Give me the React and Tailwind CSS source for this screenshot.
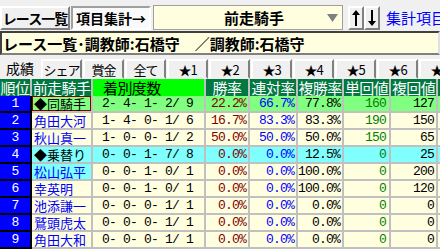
import React from "react";

const jp = "font-['Noto_Sans_CJK_JP',sans-serif]";
const mono = "font-['Liberation_Mono','Noto_Sans_CJK_JP',monospace] text-[13px] leading-none tracking-[-0.8px] whitespace-pre";

const tabs = ["成績", "シェア", "賞金", "全て", "★1", "★2", "★3", "★4", "★5", "★6", "★7"];

const cols = [
  { title: "順位", w: "w-[32px]" },
  { title: "前走騎手", w: "w-[61px]" },
  { title: "着別度数", w: "w-[113px]" },
  { title: "勝率", w: "w-[44px]" },
  { title: "連対率", w: "w-[48px]" },
  { title: "複勝率", w: "w-[46px]" },
  { title: "単回値", w: "w-[47px]" },
  { title: "複回値", w: "w-[47px]" },
];

const rows = [
  { name: "◆同騎手", rec: "2- 4- 1- 2/ 9", win: "22.2%", ren: "66.7%", fuku: "77.8%", tan: "160", fk: "127", kind: "same" },
  { name: "角田大河", rec: "1- 4- 0- 1/ 6", win: "16.7%", ren: "83.3%", fuku: "83.3%", tan: "190", fk: "150" },
  { name: "秋山真一", rec: "1- 0- 0- 1/ 2", win: "50.0%", ren: "50.0%", fuku: "50.0%", tan: "150", fk: "65" },
  { name: "◆乗替り", rec: "0- 0- 1- 7/ 8", win: "0.0%", ren: "0.0%", fuku: "12.5%", tan: "0", fk: "25", kind: "change" },
  { name: "松山弘平", rec: "0- 0- 1- 0/ 1", win: "0.0%", ren: "0.0%", fuku: "100.0%", tan: "0", fk: "200", kind: "hl" },
  { name: "幸英明", rec: "0- 0- 1- 0/ 1", win: "0.0%", ren: "0.0%", fuku: "100.0%", tan: "0", fk: "120" },
  { name: "池添謙一", rec: "0- 0- 0- 1/ 1", win: "0.0%", ren: "0.0%", fuku: "0.0%", tan: "0", fk: "0" },
  { name: "鷲頭虎太", rec: "0- 0- 0- 1/ 1", win: "0.0%", ren: "0.0%", fuku: "0.0%", tan: "0", fk: "0" },
  { name: "角田大和", rec: "0- 0- 0- 1/ 1", win: "0.0%", ren: "0.0%", fuku: "0.0%", tan: "0", fk: "0" },
];

const rowBg = (kind) => {
  if (kind === "same") return "bg-[#80ff80]";
  if (kind === "change") return "bg-[#80ffff]";
  return "bg-[#ffffe0]";
};

const cell = "h-[17px] shrink-0 border-r-2 border-b-2 border-[#c0c0c0] flex items-center";

const raised = "border-2 border-t-white border-l-white border-r-[#808080] border-b-[#808080] bg-[#f0f0f0]";

const Row = ({ r, i }) => {
  const bg = rowBg(r.kind);
  const nameBg = r.kind === "hl" ? "bg-[#80ffff]" : bg;
  const isGroup = r.kind === "same" || r.kind === "change";
  return (
    <div className="flex">
      <div className={`h-[17px] w-[32px] shrink-0 border-r-2 border-b-2 border-black bg-[#0000ff] text-white flex items-center justify-center ${mono}`}>
        {i + 1}
      </div>
      <div className={`${cell} w-[61px] ${nameBg}`}>
        {r.kind === "same" ? (
          <div className="h-full w-full border-[1.5px] border-[#800000] flex items-center pl-[1px] text-[13px] leading-none whitespace-nowrap text-black">
            {r.name}
          </div>
        ) : (
          <span className={`pl-[2px] text-[13px] leading-none whitespace-nowrap ${isGroup ? "text-black" : "text-[#0000ff]"}`}>
            {r.name}
          </span>
        )}
      </div>
      <div className={`${cell} w-[113px] ${bg} pl-[9px] text-black ${mono}`}>{r.rec}</div>
      <div className={`${cell} w-[44px] ${bg} justify-end pr-[2px] text-[#800000] ${mono}`}>{r.win}</div>
      <div className={`${cell} w-[48px] ${bg} justify-end pr-[2px] text-[#0000ff] ${mono}`}>{r.ren}</div>
      <div className={`${cell} w-[46px] ${bg} justify-end pr-[2px] text-black ${mono}`}>{r.fuku}</div>
      <div className={`${cell} w-[47px] ${bg} justify-end pr-[3px] text-[#008000] ${mono}`}>{r.tan}</div>
      <div className={`${cell} w-[47px] ${bg} justify-end pr-[2px] text-black ${mono}`}>{r.fk}</div>
      <div className={`${cell} w-[40px] ${bg}`} />
    </div>
  );
};

const Arrow = ({ up }) => (
  <svg width="8" height="16" viewBox="0 0 8 16">
    {up ? (
      <path d="M4 0 L8 5 H5 V16 H3 V5 H0 Z" fill="#000" />
    ) : (
      <path d="M4 16 L8 11 H5 V0 H3 V11 H0 Z" fill="#000" />
    )}
  </svg>
);

export default function App() {
  return (
    <div className={`w-[440px] h-[249px] overflow-hidden bg-[#f0f0f0] ${jp}`}>
      {/* toolbar */}
      <div className="h-[31px] flex items-end pb-[1px] gap-[1px]">
        <button className={`h-[24px] w-[70px] shrink-0 ${raised} text-[14px] font-bold leading-none tracking-[-1px] whitespace-nowrap text-black`}>
          レース一覧
        </button>
        <button className="h-[24px] w-[80px] shrink-0 border-2 border-t-[#a0a0a0] border-l-[#a0a0a0] border-r-white border-b-white bg-[#fafafa] text-[14px] font-bold leading-none whitespace-nowrap text-black">
          項目集計→
        </button>
        <div className="ml-[1px] h-[25px] w-[190px] shrink-0 border border-[#a0a0a0] bg-[#ffffe0] flex items-center relative">
          <span className="pl-[70px] text-[15px] font-bold text-black leading-none">前走騎手</span>
          <svg className="absolute right-[4px] top-[8px]" width="11" height="8" viewBox="0 0 11 8">
            <path d="M0 0 H11 L5.5 8 Z" fill="#808080" />
          </svg>
        </div>
        <div className="ml-[4px] flex h-[24px]">
          <button className={`w-[16px] h-full ${raised} flex items-center justify-center`}>
            <Arrow up />
          </button>
          <button className={`w-[16px] h-full ${raised} flex items-center justify-center`}>
            <Arrow />
          </button>
        </div>
        <span className="ml-[5px] self-center mt-[4px] whitespace-nowrap text-[15px] leading-none text-[#0000ff]">
          集計項目メニュー
        </span>
      </div>

      {/* title */}
      <div className="h-[24px] border-2 border-t-[#404040] border-l-[#404040] border-r-[#e0e0e0] border-b-[#808080] bg-[#ffffe0] flex items-center pl-[1px]">
        <span className="whitespace-pre text-[15px] font-bold leading-none text-black">
          レース一覧･調教師:石橋守　／調教師:石橋守
        </span>
      </div>

      {/* tabs */}
      <div className="mt-[2px] h-[22px] flex items-end">
        {tabs.map((t, i) =>
          i === 0 ? (
            <div key={t} className="h-[22px] w-[40px] shrink-0 bg-[#f0f0f0] flex items-center justify-center text-[14px] leading-none whitespace-nowrap text-black">
              {t}
            </div>
          ) : (
            <div key={t} className="h-[20px] w-[41px] shrink-0 ml-[1px] border-2 border-t-white border-l-white border-r-[#808080] border-b-[#f0f0f0] bg-[#f0f0f0] flex items-center justify-center text-[13px] leading-none tracking-[-1px] whitespace-nowrap text-black">
              {t}
            </div>
          )
        )}
      </div>

      {/* header */}
      <div className="flex">
        {cols.map((c, i) => (
          <div
            key={c.title}
            className={`h-[17px] shrink-0 border-r-2 border-[#c0c0c0] flex items-center text-[15px] leading-none tracking-[-0.6px] whitespace-nowrap ${c.w} ${
              i === 2 ? "bg-[#00ff00] text-black pl-[10px]" : "bg-[#007840] text-white justify-center"
            }`}
          >
            {c.title}
          </div>
        ))}
        <div className="h-[17px] w-[40px] shrink-0 bg-[#007840]" />
      </div>

      {rows.map((r, i) => (
        <Row key={r.name + i} r={r} i={i} />
      ))}
    </div>
  );
}
